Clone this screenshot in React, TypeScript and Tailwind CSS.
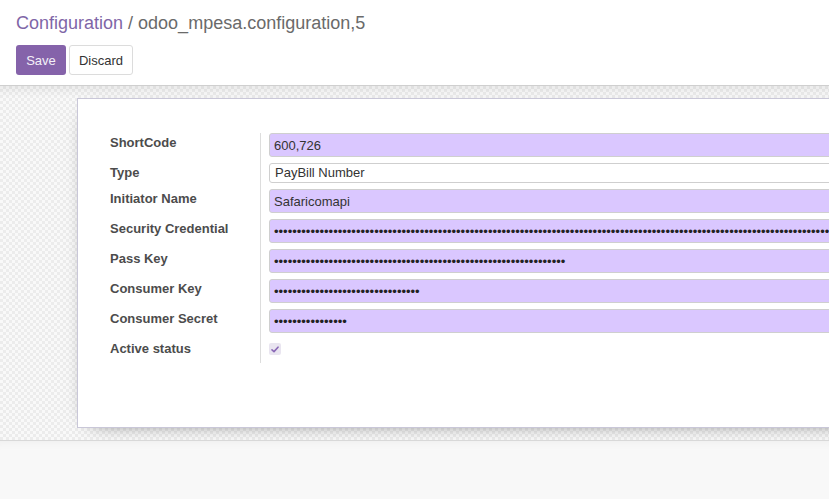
import React from "react";

const rows: { label: string; h: string }[] = [
  { label: "ShortCode", h: "h-[24px]" },
  { label: "Type", h: "h-[20px]" },
  { label: "Initiator Name", h: "h-[24px]" },
  { label: "Security Credential", h: "h-[24px]" },
  { label: "Pass Key", h: "h-[24px]" },
  { label: "Consumer Key", h: "h-[24px]" },
  { label: "Consumer Secret", h: "h-[24px]" },
  { label: "Active status", h: "h-[24px]" },
];

function TextField({ value }: { value: string }) {
  return (
    <input
      readOnly
      value={value}
      className="h-[24px] w-full rounded-[3px] border border-[#cfcfcf] bg-[#dac7ff] pl-[4px] text-[13px] text-[#333] outline-none font-['Liberation_Sans',Arial,sans-serif]"
    />
  );
}

function PwField({ n }: { n: number }) {
  return (
    <input
      readOnly
      type="password"
      value={"x".repeat(n)}
      className="h-[24px] w-full rounded-[3px] border border-[#cfcfcf] bg-[#dac7ff] pl-[4px] text-[13px] text-[#222] outline-none font-['Liberation_Sans',Arial,sans-serif]"
    />
  );
}

export default function App() {
  return (
    <div className="w-[829px] h-[499px] overflow-hidden bg-white font-['Liberation_Sans',Arial,sans-serif]">
      {/* control panel */}
      <div className="h-[86px] border-b border-[#cfcfcf] bg-white pl-[16px] pt-[11px]">
        <div className="text-[18px] leading-[24px] whitespace-nowrap">
          <span className="text-[#7f66a7]">Configuration</span>
          <span className="text-[#6a6a6a]"> / odoo_mpesa.configuration,5</span>
        </div>
        <div className="mt-[10px] flex gap-[3px]">
          <button className="h-[30px] w-[50px] rounded-[3px] bg-[#8563aa] pt-[1px] text-[13px] text-[#f4f0f8]">
            Save
          </button>
          <button className="h-[30px] w-[64px] rounded-[3px] border border-[#dcdcdc] bg-white pt-[1px] text-[13px] text-[#333]">
            Discard
          </button>
        </div>
      </div>

      {/* content */}
      <div className="h-[354px] overflow-hidden bg-[repeating-conic-gradient(#ececec_0_25%,#f9f9f9_0_50%)] bg-[length:6px_6px] pt-[12px] pl-[77px] shadow-[inset_0_12px_10px_-8px_rgba(0,0,0,0.07)]">
        <div className="h-[330px] w-[820px] border border-[#c9c7d8] bg-white pt-[34px] shadow-[0_5px_20px_-15px_black]">
          <div className="flex">
            <div className="flex w-[183px] flex-col gap-[6px] border-r border-[#dddddd] pl-[32px]">
              {rows.map((r) => (
                <div
                  key={r.label}
                  className={`${r.h} pt-[1px] text-[13px] font-bold leading-[18px] text-[#4c4c4c] whitespace-nowrap`}
                >
                  {r.label}
                </div>
              ))}
            </div>
            <div className="flex flex-1 flex-col gap-[6px] pl-[8px] pr-[10px]">
              <TextField value="600,726" />
              <div className="flex h-[20px] w-full items-center rounded-[3px] border border-[#cfcfcf] bg-white pl-[5px] text-[13px] text-[#333]">
                PayBill Number
              </div>
              <TextField value="Safaricomapi" />
              <PwField n={200} />
              <PwField n={64} />
              <PwField n={32} />
              <PwField n={16} />
              <div className="h-[24px]">
                <div className="mt-[4px] flex h-[12px] w-[12px] items-center justify-center rounded-[2px] bg-[#e9e5f0]">
                  <svg width="8" height="7" viewBox="0 0 8 7">
                    <path
                      d="M1 3.8 L3 5.6 L7 1.2"
                      fill="none"
                      stroke="#8a68b6"
                      strokeWidth="1.6"
                      strokeLinecap="round"
                      strokeLinejoin="round"
                    />
                  </svg>
                </div>
              </div>
            </div>
          </div>
        </div>
      </div>

      {/* bottom area */}
      <div className="h-[59px] border-t border-[#d8d8d8] bg-[#f8f8f8] shadow-[inset_0_8px_8px_-6px_rgba(0,0,0,0.04)]" />
    </div>
  );
}
